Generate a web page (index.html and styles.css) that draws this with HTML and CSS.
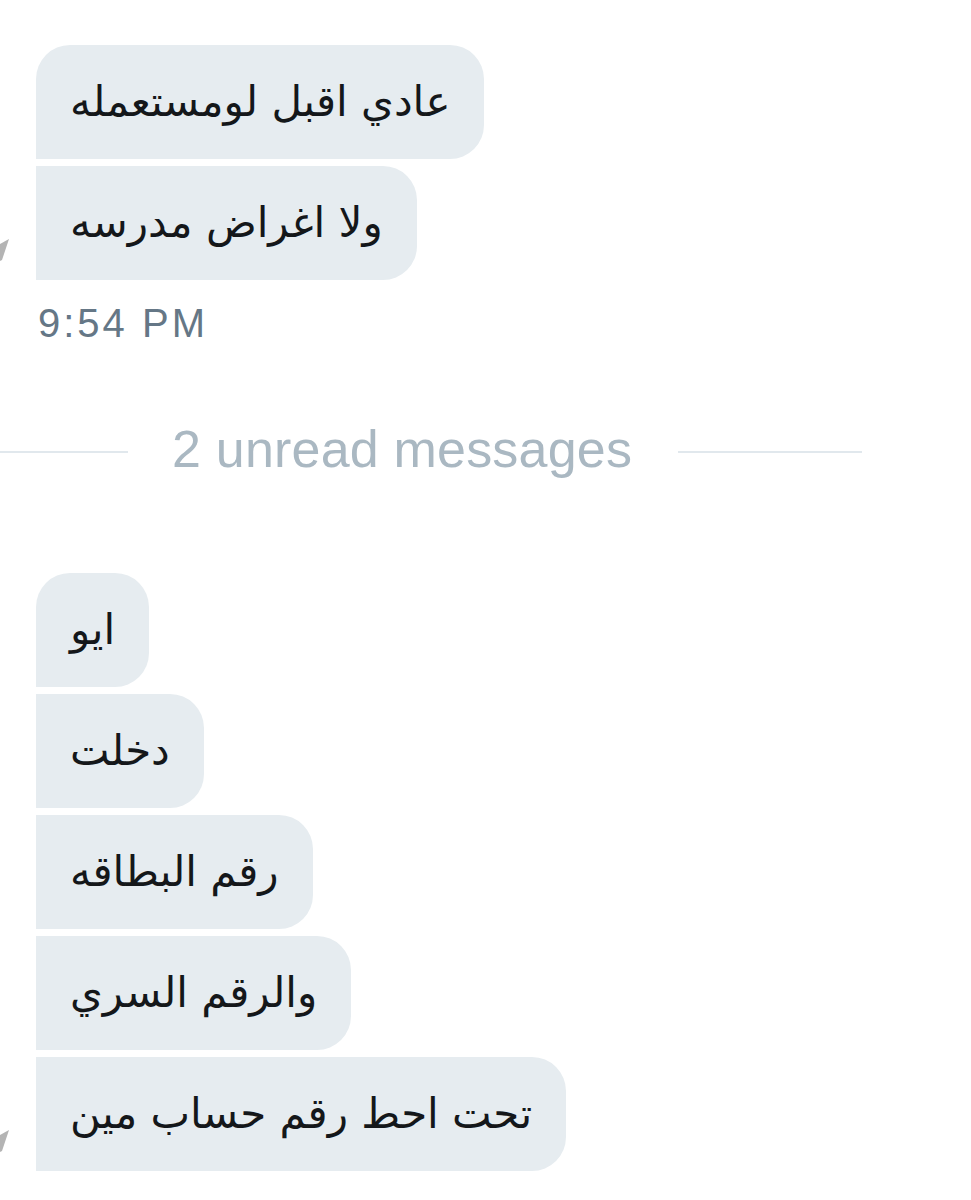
FILE: index.html
```html
<!DOCTYPE html>
<html>
<head>
  <meta charset="utf-8">
  <title>Messages</title>
  <link rel="stylesheet" href="styles.css">
</head>
<body>
  <div class="thread">
    <div class="group">
      <div class="avatar">
        <svg width="10" height="26" viewBox="0 0 10 26"><polygon points="0,8 9,3 2,24 0,25" fill="#b4b4b4"/></svg>
      </div>
      <div class="bubbles">
        <div class="bubble first" dir="rtl">عادي اقبل لومستعمله</div>
        <div class="bubble" dir="rtl">ولا اغراض مدرسه</div>
      </div>
    </div>
    <div class="time">9:54 PM</div>

    <div class="divider">
      <span class="line left"></span>
      <span class="divider-text">2 unread messages</span>
      <span class="line right"></span>
    </div>

    <div class="group second">
      <div class="avatar">
        <svg width="10" height="26" viewBox="0 0 10 26"><polygon points="0,8 9,3 2,24 0,25" fill="#b4b4b4"/></svg>
      </div>
      <div class="bubbles">
        <div class="bubble first" dir="rtl">ايو</div>
        <div class="bubble" dir="rtl">دخلت</div>
        <div class="bubble" dir="rtl">رقم البطاقه</div>
        <div class="bubble" dir="rtl">والرقم السري</div>
        <div class="bubble" dir="rtl">تحت احط رقم حساب مين</div>
      </div>
    </div>
    <div class="time">10:03 PM</div>
  </div>
</body>
</html>
```

FILE: styles.css
```css
body {
  margin: 0;
  background: #fff;
  font-family: 'Liberation Sans', Arial, sans-serif;
  overflow: hidden;
}

.thread {
  padding-top: 45px;
}

.group {
  display: flex;
  align-items: flex-end;
}

.group.second {
  margin-top: 94px;
}

.avatar {
  width: 36px;
  flex-shrink: 0;
  padding-bottom: 18px;
}

.avatar svg {
  display: block;
}

.bubbles {
  display: flex;
  flex-direction: column;
  align-items: flex-start;
  gap: 7px;
}

.bubble {
  background: #e6ecf0;
  color: #14171a;
  font-family: 'DejaVu Sans', sans-serif;
  font-size: 42px;
  line-height: 50px;
  padding: 32px 34px;
  border-radius: 0 34px 34px 0;
}

.bubble.first {
  border-top-left-radius: 34px;
}

.time {
  margin-top: 19px;
  padding-left: 38px;
  font-size: 40px;
  line-height: 48px;
  letter-spacing: 3px;
  color: #657786;
}

.divider {
  display: flex;
  align-items: center;
  margin-top: 72px;
  height: 60px;
}

.line {
  height: 2px;
  margin-top: 5px;
  background: #e1e8ed;
}

.line.left {
  width: 128px;
}

.line.right {
  width: 184px;
}

.divider-text {
  margin: 0 46px 0 44px;
  font-size: 52px;
  line-height: 60px;
  letter-spacing: 0.2px;
  color: #aab8c2;
}
```
